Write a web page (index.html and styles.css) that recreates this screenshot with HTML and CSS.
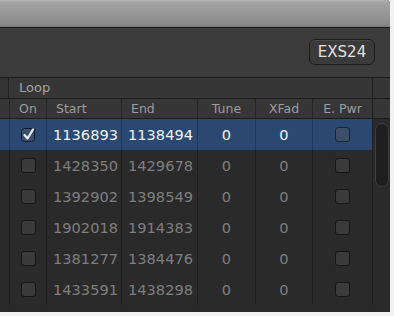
FILE: index.html
```html
<!DOCTYPE html>
<html lang="en">
<head>
    <meta charset="UTF-8">
    <meta name="viewport" content="width=device-width, initial-scale=1.0">
    <title>Zone Loop</title>
    <link rel="stylesheet" href="styles.css">
</head>
<body>

    <div class="window">
        <div class="titlebar"></div>

        <div class="toolbar">
            <button class="sampler-btn">EXS24</button>
        </div>

        <div class="table">
            <div class="table-main">
                <div class="group-row">
                    <div class="group-gap"></div>
                    <div class="group-label">Loop</div>
                </div>

                <div class="row head-row">
                    <div class="cell"></div>
                    <div class="cell center">On</div>
                    <div class="cell left">Start</div>
                    <div class="cell left">End</div>
                    <div class="cell center">Tune</div>
                    <div class="cell center">XFad</div>
                    <div class="cell center">E. Pwr</div>
                </div>

                <div id="rows"></div>
            </div>

            <div class="scroll-col">
                <div class="scroll-group"></div>
                <div class="scroll-head"></div>
                <div class="scroll-track">
                    <div class="scroll-knob"></div>
                </div>
            </div>
        </div>
    </div>

<script>
    let zones = [
        { on: true, start: 1136893, end: 1138494, selected: true },
        { on: false, start: 1428350, end: 1429678 },
        { on: false, start: 1392902, end: 1398549 },
        { on: false, start: 1902018, end: 1914383 },
        { on: false, start: 1381277, end: 1384476 },
        { on: false, start: 1433591, end: 1438298 }
    ];

    let check = `<svg width="17" height="17" viewBox="0 0 17 17">
        <rect x="1.5" y="2.5" width="13" height="13" rx="3" fill="#3a4f70" stroke="#121822"/>
        <path d="M4.5 9 L7.5 12.5 L13 3.5" fill="none" stroke="#e4ecf7" stroke-width="2.2" stroke-linecap="round" stroke-linejoin="round"/>
    </svg>`;

    function box(selected) {
        return `<span class="box ${selected ? "box-sel" : ""}"></span>`;
    }

    let rowsDiv = document.getElementById("rows");
    zones.forEach(zone => {
        rowsDiv.innerHTML += `
            <div class="row data-row ${zone.selected ? "selected" : ""}">
                <div class="cell"></div>
                <div class="cell center">${zone.on ? check : box(zone.selected)}</div>
                <div class="cell num">${zone.start}</div>
                <div class="cell num">${zone.end}</div>
                <div class="cell center">0</div>
                <div class="cell center">0</div>
                <div class="cell center">${box(zone.selected)}</div>
            </div>
        `;
    });
</script>

</body>
</html>
```

FILE: styles.css
```css
* {
    box-sizing: border-box;
}
body {
    margin: 0;
    background-color: #f2f2f2;
    font-family: "DejaVu Sans", sans-serif;
}
.window {
    width: 390px;
    height: 312px;
    overflow: hidden;
    background: #2a2a2a;
    border-top-right-radius: 4px;
}
.titlebar {
    height: 28px;
    background: linear-gradient(#b4b4b4, #a2a2a2 10%, #8a8a8a 90%, #7a7a7a);
    border-bottom: 1px solid #1b1b1b;
}
.toolbar {
    height: 49px;
    background: #3c3c3c;
    display: flex;
    justify-content: flex-end;
    align-items: flex-start;
    padding: 11px 15px 0 0;
}
.sampler-btn {
    width: 66px;
    height: 26px;
    background: #3a3a3a;
    border: 1px solid #1c1c1c;
    border-radius: 6px;
    color: #e2e2e2;
    font-family: "DejaVu Sans", sans-serif;
    font-size: 15px;
    padding: 0;
    box-shadow: inset 0 1px 0 #4a4a4a;
}
.table {
    display: flex;
    border-top: 1px solid #1a1a1a;
}
.table-main {
    width: 372px;
}
.group-row {
    display: flex;
    height: 21px;
    background: #363636;
    border-bottom: 1px solid #1c1c1c;
}
.group-gap {
    width: 9px;
    border-right: 1px solid #222;
    background: #333;
}
.group-label {
    padding-left: 10px;
    color: #a2a2a2;
    font-size: 13px;
    line-height: 20px;
}
.row {
    display: grid;
    grid-template-columns: 9px 37px 75px 76px 58px 57px 60px;
}
.cell + .cell {
    border-left: 1px solid #1e1e1e;
}
.head-row {
    height: 20px;
    background: #363636;
    border-bottom: 1px solid #1c1c1c;
    color: #9c9c9c;
    font-size: 12.5px;
    line-height: 19px;
}
.head-row .cell + .cell {
    border-left-color: #262626;
}
.head-row .left {
    padding-left: 9px;
}
.center {
    text-align: center;
    display: flex;
    justify-content: center;
    align-items: center;
}
.data-row {
    height: 31px;
    color: #7e7e7e;
    font-size: 14.6px;
}
.data-row .cell {
    display: flex;
    align-items: center;
}
.data-row .center {
    justify-content: center;
}
.num {
    padding-left: 6px;
}
.selected {
    background: #2b4870;
    color: #f2f2f2;
}
.selected .cell + .cell {
    border-left-color: #22385a;
}
.box {
    display: block;
    width: 15px;
    height: 15px;
    border-radius: 3px;
    background: #3a3a3a;
    border: 1px solid #161616;
}
.box-sel {
    background: #3d4e68;
    border-color: #1a2434;
}
.scroll-col {
    width: 18px;
    border-left: 1px solid #1e1e1e;
}
.scroll-group {
    height: 21px;
    background: #363636;
    border-bottom: 1px solid #1c1c1c;
}
.scroll-head {
    height: 20px;
    background: #363636;
    border-bottom: 1px solid #1c1c1c;
}
.scroll-track {
    padding: 4px 0 0 2px;
}
.scroll-knob {
    width: 14px;
    height: 64px;
    border-radius: 7px;
    background: #1e1e1e;
    border: 1px solid #3e3e3e;
}
```
